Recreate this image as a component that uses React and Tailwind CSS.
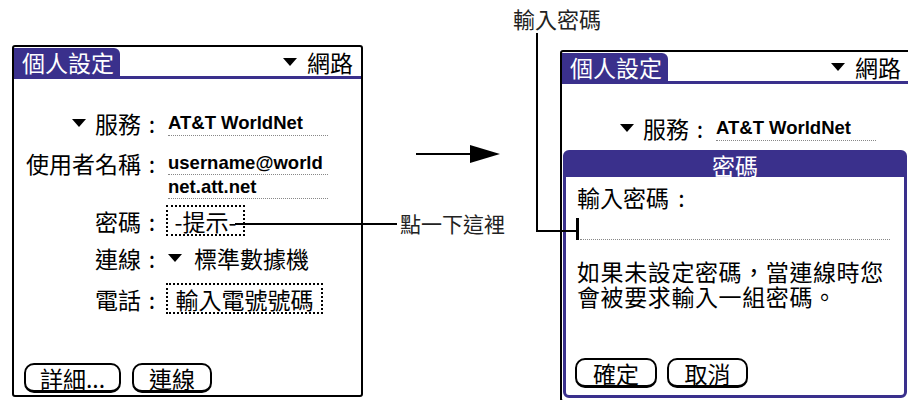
import React from "react";

// Small black drop-down triangle used by Palm popup triggers
function Tri() {
  return (
    <svg width="14" height="8" viewBox="0 0 14 8" className="shrink-0">
      <path d="M0 0h14L7 8z" fill="#000" />
    </svg>
  );
}

function Colon() {
  return <span className="w-[25px] pr-[3px] text-center">:</span>;
}

function PalmButton({ children, width }) {
  return (
    <div
      className={`${width} h-[30px] flex items-center justify-center border-2 border-b-[3px] border-black rounded-[10px] bg-white`}
    >
      {children}
    </div>
  );
}

function TitleBar() {
  return (
    <div className="h-[32px] flex items-stretch border-b-[3px] border-[#3a308c]">
      <div className="mt-[1px] bg-[#3a308c] text-white flex items-center pl-[8px] pr-[6px] rounded-tr-[6px]">
        個人設定
      </div>
      <div className="flex-1 flex items-center justify-end gap-[10px] pr-[8px]">
        <Tri />
        <span>網路</span>
      </div>
    </div>
  );
}

function ServiceRow() {
  return (
    <div className="flex mt-[32px]">
      <div className="w-[152px] h-[24px] flex items-center justify-end">
        <Tri />
        <span className="ml-[9px]">服務</span>
        <Colon />
      </div>
      <div className="ml-[2px] w-[160px] h-[25px] border-b border-dotted border-[#888] font-['Liberation_Sans',sans-serif] font-bold text-[18.5px] leading-[24px]">
        AT&amp;T WorldNet
      </div>
    </div>
  );
}

export default function App() {
  return (
    <div className="relative w-[908px] h-[400px] overflow-hidden bg-white flex items-start font-['Noto_Sans_CJK_TC',sans-serif] text-[23px] leading-[24px] text-black">
      {/* Left screen */}
      <div className="ml-[12px] mt-[45px] w-[351px] h-[352px] shrink-0 border-2 border-black rounded-[3px] flex flex-col bg-white">
        <TitleBar />
        <ServiceRow />

        <div className="flex mt-[15px]">
          <div className="w-[152px] h-[24px] flex justify-end">
            <span>使用者名稱</span>
            <Colon />
          </div>
          <div className="ml-[2px] w-[160px] font-['Liberation_Sans',sans-serif] font-bold text-[18.5px] leading-[23px]">
            <div className="h-[24px] border-b border-dotted border-[#888]">username@world</div>
            <div className="h-[24px] border-b border-dotted border-[#888]">net.att.net</div>
          </div>
        </div>

        <div className="flex items-center mt-[6px]">
          <div className="w-[152px] flex justify-end">
            <span>密碼</span>
            <Colon />
          </div>
          <div className="w-[79px] h-[31px] border-2 border-dotted border-black flex items-center justify-center">
            -提示-
          </div>
        </div>

        <div className="flex items-center mt-[10px] h-[24px]">
          <div className="w-[152px] flex justify-end">
            <span>連線</span>
            <Colon />
          </div>
          <div className="ml-[2px] flex items-center gap-[12px]">
            <Tri />
            <span>標準數據機</span>
          </div>
        </div>

        <div className="flex items-center mt-[13px]">
          <div className="w-[152px] flex justify-end">
            <span>電話</span>
            <Colon />
          </div>
          <div className="w-[157px] h-[31px] border-2 border-dotted border-black flex items-center justify-center">
            輸入電號號碼
          </div>
        </div>

        <div className="flex-1" />
        <div className="flex gap-[11px] pl-[10px] mb-[2px]">
          <PalmButton width="w-[97px]">詳細...</PalmButton>
          <PalmButton width="w-[80px]">連線</PalmButton>
        </div>
      </div>

      {/* Right screen with password dialog */}
      <div className="relative ml-[197px] mt-[50px] w-[351px] h-[352px] shrink-0 border-2 border-black rounded-[3px] flex flex-col bg-white">
        <TitleBar />
        <ServiceRow />

        <div className="absolute left-[1px] top-[98px] w-[344px] h-[248px] border-[3px] border-[#3a308c] rounded-[6px] bg-white flex flex-col">
          <div className="h-[24px] bg-[#3a308c] text-white flex items-center justify-center">密碼</div>
          <div className="flex-1 flex flex-col px-[10px]">
            <div className="mt-[8px] pl-[1px] flex">
              <span>輸入密碼</span>
              <span className="w-[25px] text-center">:</span>
            </div>
            <div className="mt-[9px] flex items-end">
              <div className="w-[3px] h-[22px] bg-black" />
              <div className="flex-1 ml-[1px] mr-[4px] border-b border-dotted border-[#888]" />
            </div>
            <div className="mt-[19px] pl-[1px] leading-[25px] tracking-[0.6px]">
              <div>如果未設定密碼，當連線時您</div>
              <div>會被要求輸入一組密碼。</div>
            </div>
            <div className="flex-1" />
            <div className="flex gap-[10px] mb-[7px] -ml-[1px]">
              <PalmButton width="w-[82px]">確定</PalmButton>
              <PalmButton width="w-[81px]">取消</PalmButton>
            </div>
          </div>
        </div>
      </div>

      {/* Callouts */}
      <div className="absolute left-[513px] top-[5px] text-[22px] leading-[26px] text-[#222]">輸入密碼</div>
      <div className="absolute left-[536px] top-[33px] w-[2px] h-[199px] bg-black" />
      <div className="absolute left-[536px] top-[230px] w-[40px] h-[2px] bg-black" />

      <div className="absolute left-[235px] top-[223px] w-[162px] h-[2px] bg-black" />
      <div className="absolute left-[400px] top-[210px] text-[21px] leading-[26px] text-[#222]">點一下這裡</div>

      <svg className="absolute left-[414px] top-[144px]" width="88" height="20" viewBox="0 0 88 20">
        <path d="M2 9h56v2H2z" fill="#000" />
        <path d="M56 1L86 10L56 19z" fill="#000" />
      </svg>
    </div>
  );
}
